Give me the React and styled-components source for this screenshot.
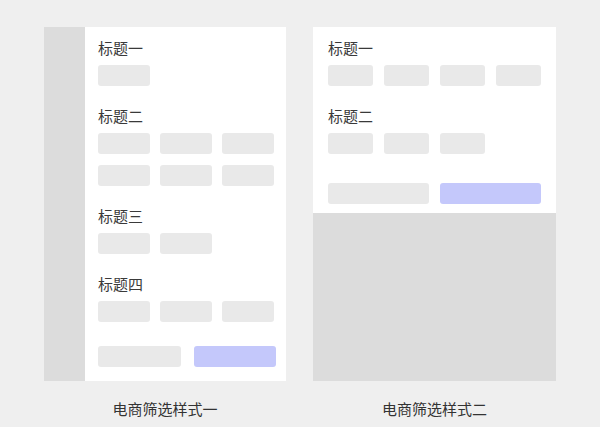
import React from "react";
import styled, { createGlobalStyle } from "styled-components";

const Global = createGlobalStyle`
  html, body { margin: 0; padding: 0; background: #efefef; }
  body { font-family: "Noto Sans CJK SC", "Noto Sans", sans-serif; color: #333; }
`;

const Page = styled.div`
  width: 600px;
  height: 427px;
  box-sizing: border-box;
  padding: 27px 44px 0;
  display: flex;
  gap: 27px;
`;

const Column = styled.div`
  width: ${(p) => p.$w}px;
  display: flex;
  flex-direction: column;
  align-items: center;
`;

const Frame = styled.div`
  width: 100%;
  height: 354px;
  display: flex;
  flex-direction: ${(p) => (p.$stack ? "column" : "row")};
  background: #dcdcdc;
`;

const Strip = styled.div`
  width: 41px;
  flex: none;
  background: #dcdcdc;
`;

const Panel = styled.div`
  flex: ${(p) => (p.$grow ? 1 : "none")};
  background: #fff;
  box-sizing: border-box;
  padding: ${(p) => p.$pad};
  display: flex;
  flex-direction: column;
`;

const Section = styled.div`
  display: flex;
  flex-direction: column;
  & + & { margin-top: 20px; }
`;

const Title = styled.div`
  font-size: 15px;
  line-height: 20px;
  color: #3a3a3a;
  margin-bottom: 7px;
`;

const Grid = styled.div`
  display: grid;
  grid-template-columns: repeat(${(p) => p.$cols}, ${(p) => p.$cw}px);
  column-gap: ${(p) => p.$gap}px;
  row-gap: 11px;
`;

const Chip = styled.div`
  height: 21px;
  border-radius: 3px;
  background: #e9e9e9;
`;

const Actions = styled.div`
  display: flex;
  gap: ${(p) => p.$gap}px;
  margin-top: ${(p) => p.$top}px;
`;

const Button = styled.div`
  width: ${(p) => p.$w}px;
  height: 21px;
  border-radius: 3px;
  background: ${(p) => (p.$primary ? "#c4c8fb" : "#e9e9e9")};
`;

const Caption = styled.div`
  margin-top: 18px;
  font-size: 15px;
  line-height: 20px;
  color: #333;
`;

const chips = (n) => Array.from({ length: n }, (_, i) => <Chip key={i} />);

export default function App() {
  return (
    <>
      <Global />
      <Page>
        <Column $w={242}>
          <Frame>
            <Strip />
            <Panel $grow $pad="11px 10px 0 13px">
              <Section>
                <Title>标题一</Title>
                <Grid $cols={3} $cw={52} $gap={10}>{chips(1)}</Grid>
              </Section>
              <Section>
                <Title>标题二</Title>
                <Grid $cols={3} $cw={52} $gap={10}>{chips(6)}</Grid>
              </Section>
              <Section>
                <Title>标题三</Title>
                <Grid $cols={3} $cw={52} $gap={10}>{chips(2)}</Grid>
              </Section>
              <Section>
                <Title>标题四</Title>
                <Grid $cols={3} $cw={52} $gap={10}>{chips(3)}</Grid>
              </Section>
              <Actions $gap={13} $top={24}>
                <Button $w={83} />
                <Button $w={82} $primary />
              </Actions>
            </Panel>
          </Frame>
          <Caption>电商筛选样式一</Caption>
        </Column>
        <Column $w={243}>
          <Frame $stack>
            <Panel $pad="11px 15px 9px 15px">
              <Section>
                <Title>标题一</Title>
                <Grid $cols={4} $cw={45} $gap={11}>{chips(4)}</Grid>
              </Section>
              <Section>
                <Title>标题二</Title>
                <Grid $cols={4} $cw={45} $gap={11}>{chips(3)}</Grid>
              </Section>
              <Actions $gap={11} $top={29}>
                <Button $w={101} />
                <Button $w={101} $primary />
              </Actions>
            </Panel>
          </Frame>
          <Caption>电商筛选样式二</Caption>
        </Column>
      </Page>
    </>
  );
}
